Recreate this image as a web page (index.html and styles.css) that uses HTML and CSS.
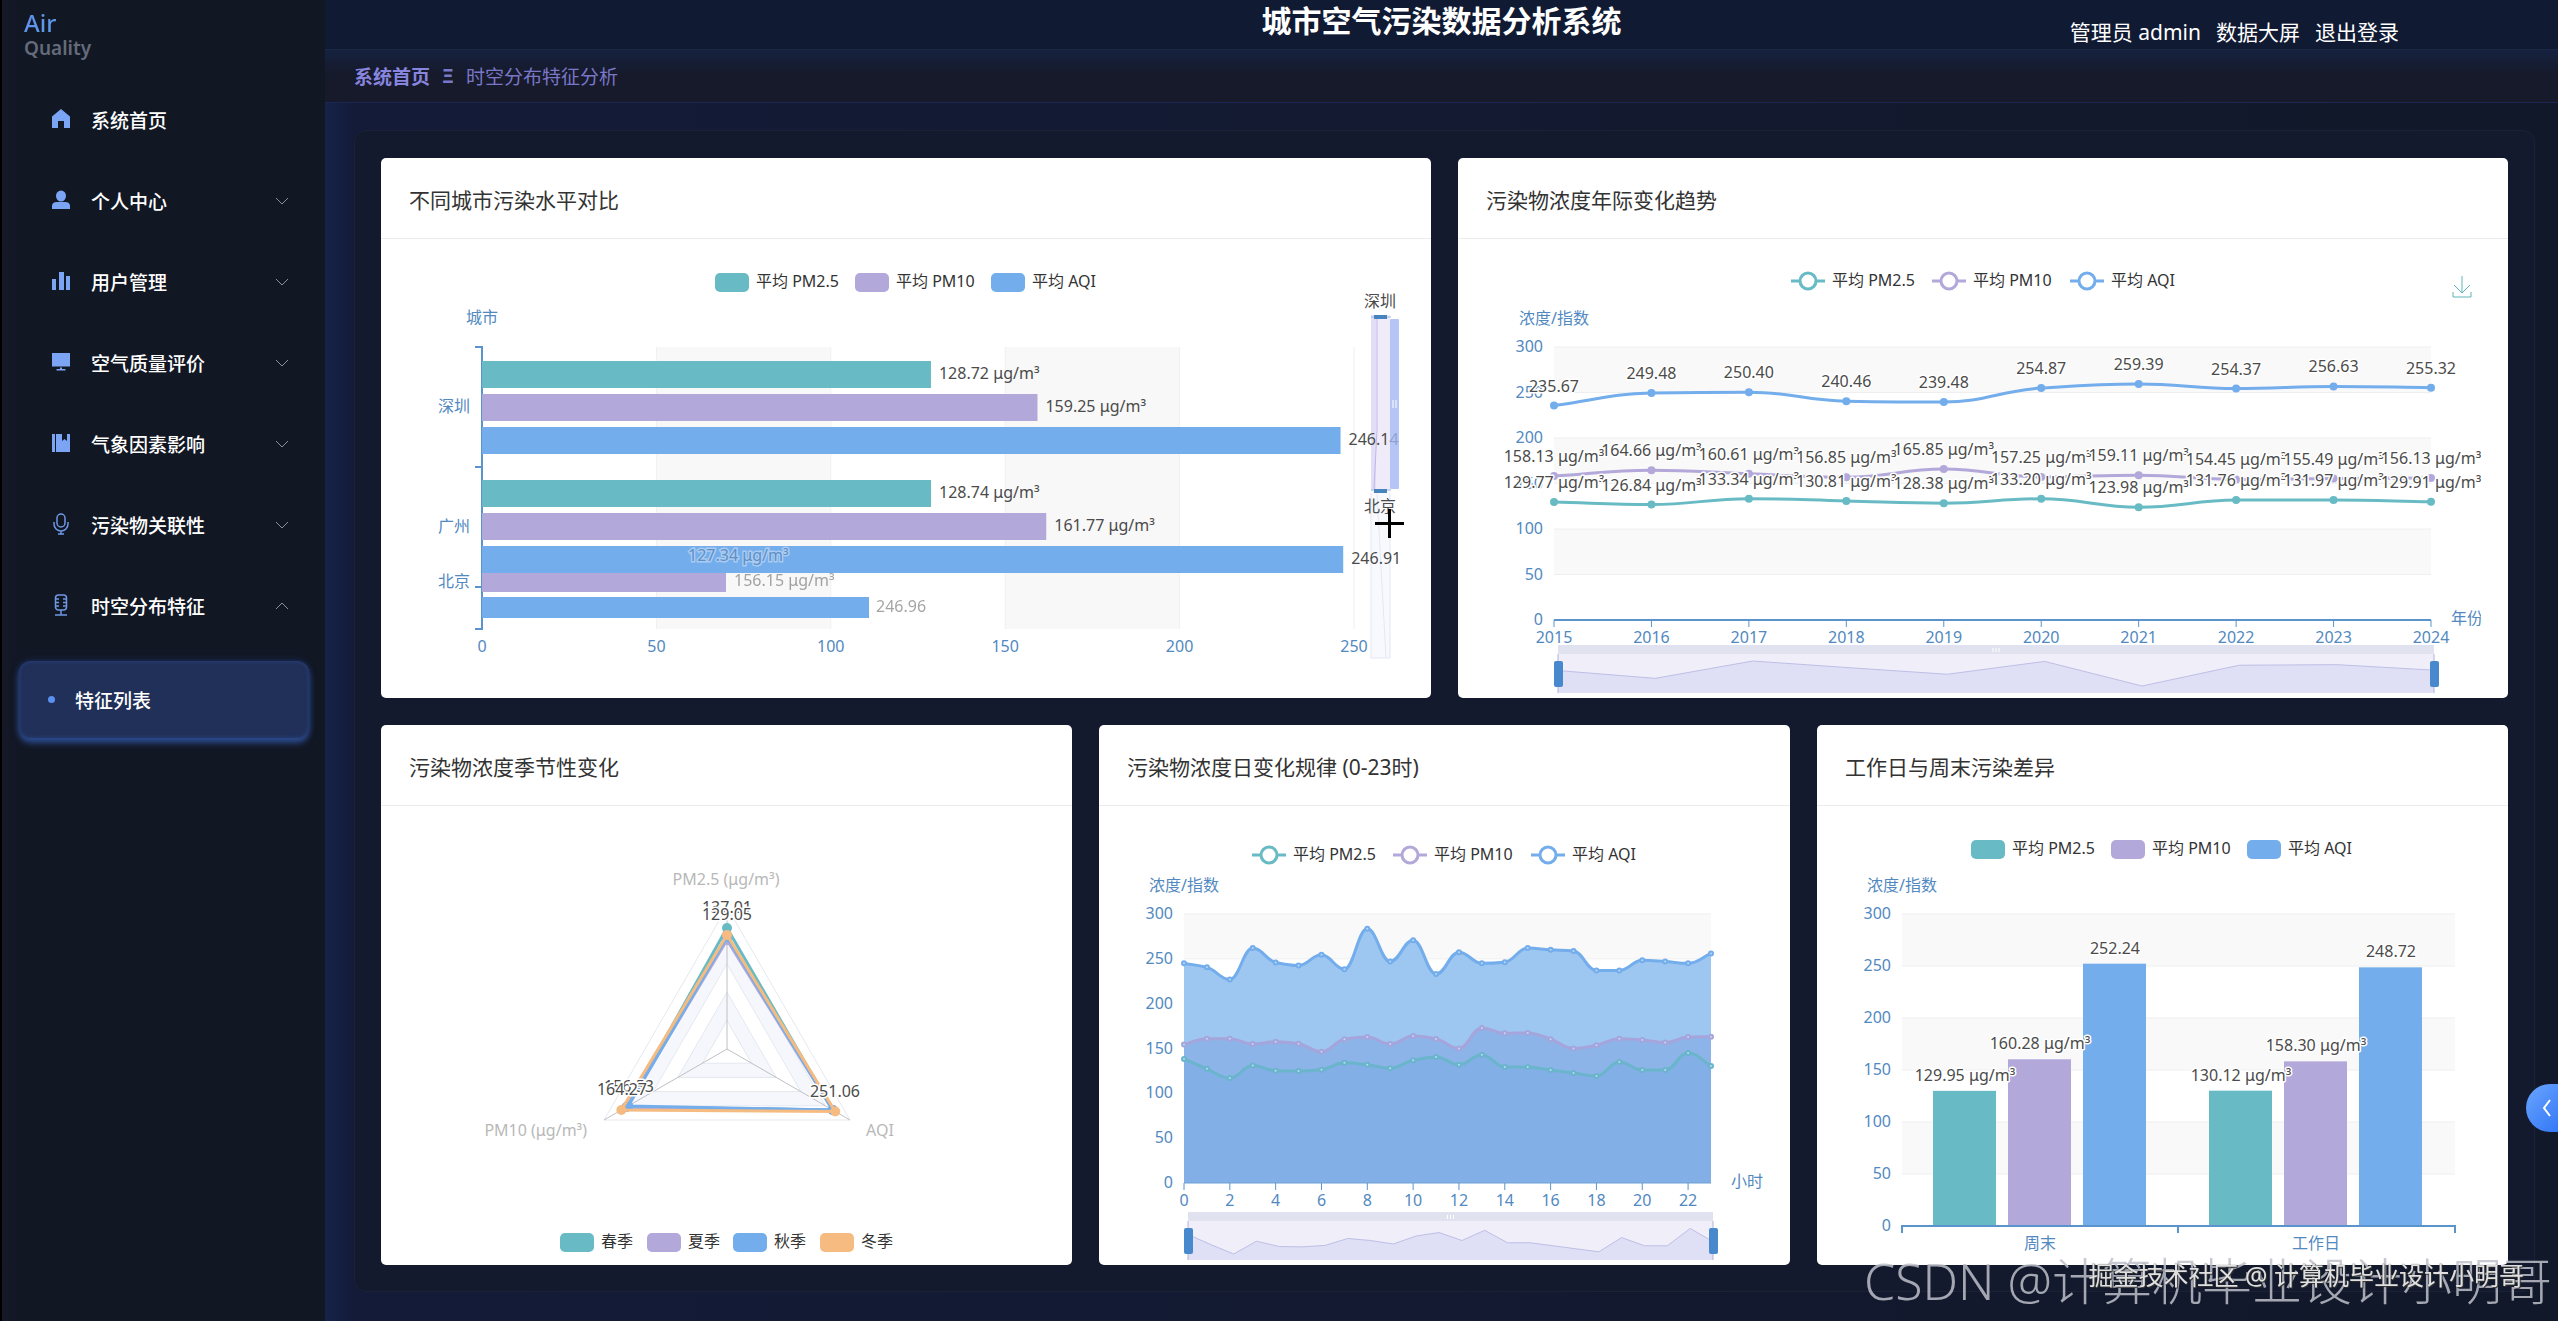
FILE: index.html
```html
<!DOCTYPE html>
<html lang="zh-CN">
<head>
<meta charset="utf-8">
<meta name="viewport" content="width=device-width, initial-scale=1">
<title>城市空气污染数据分析系统</title>
<link rel="stylesheet" href="styles.css">
</head>
<body>
<div class="app">
  <aside class="sidebar">
    <div class="logo"><strong class="logo-main">Air</strong><span class="logo-sub">Quality</span></div>
    <nav class="menu">
      <a class="menu-item" href="#home">
        <svg class="icon" viewBox="0 0 20 20"><path d="M10 0 19 7.500V19h-6v-7H7v7H1V7.500z"/></svg>
        <span class="menu-text">系统首页</span>
      </a>
      <button class="menu-item" type="button">
        <svg class="icon" viewBox="0 0 20 20"><ellipse cx="10" cy="6" rx="5" ry="5.500"/><path d="M1 19v-3q0-4 5-4h8q5 0 5 4v3z"/></svg>
        <span class="menu-text">个人中心</span>
        <svg class="chevron" viewBox="0 0 14 8"><path d="M1 1l6 6 6-6"/></svg>
      </button>
      <button class="menu-item" type="button">
        <svg class="icon" viewBox="0 0 20 20"><path d="M1 8h4v11H1zM8 1h5v18H8zM15 5h4v14h-4z"/></svg>
        <span class="menu-text">用户管理</span>
        <svg class="chevron" viewBox="0 0 14 8"><path d="M1 1l6 6 6-6"/></svg>
      </button>
      <button class="menu-item" type="button">
        <svg class="icon" viewBox="0 0 20 20"><path d="M1 1h18v13.500H1zM9 15.500h2v1.500h3.500v1.500h-9V17H9z"/></svg>
        <span class="menu-text">空气质量评价</span>
        <svg class="chevron" viewBox="0 0 14 8"><path d="M1 1l6 6 6-6"/></svg>
      </button>
      <button class="menu-item" type="button">
        <svg class="icon" viewBox="0 0 20 20"><path d="M1 1h3v18H1zM5 1h6v7l2.500-2L16 8V1h3v18H5z"/></svg>
        <span class="menu-text">气象因素影响</span>
        <svg class="chevron" viewBox="0 0 14 8"><path d="M1 1l6 6 6-6"/></svg>
      </button>
      <button class="menu-item" type="button">
        <svg class="icon icon-line" viewBox="0 0 20 22"><rect x="6" y="1" width="8" height="13" rx="4"/><path d="M3 9v2a7 7 0 0 0 14 0V9M10 18v3M7 21h6"/></svg>
        <span class="menu-text">污染物关联性</span>
        <svg class="chevron" viewBox="0 0 14 8"><path d="M1 1l6 6 6-6"/></svg>
      </button>
      <button class="menu-item" type="button" aria-expanded="true">
        <svg class="icon icon-line" viewBox="0 0 20 22"><rect x="4.500" y="1" width="11" height="15" rx="3"/><path d="M5 5h3M5 8.500h3M5 12h3M15 5h-3M15 8.500h-3M15 12h-3M10 16v5M4 21h12"/></svg>
        <span class="menu-text">时空分布特征</span>
        <svg class="chevron" viewBox="0 0 14 8"><path d="M1 7l6-6 6 6"/></svg>
      </button>
      <a class="submenu-item" href="#features"><span class="bullet"></span>特征列表</a>
    </nav>
  </aside>

  <div class="main">
    <header class="topbar">
      <h1 class="title">城市空气污染数据分析系统</h1>
      <nav class="user-nav"><span>管理员 admin</span><a href="#screen">数据大屏</a><a href="#logout">退出登录</a></nav>
    </header>
    <nav class="breadcrumb"><a class="crumb-home" href="#home">系统首页</a><b>Ξ</b><span>时空分布特征分析</span></nav>

    <main class="panel">
      <section class="card wide">
        <h2 class="card-title">不同城市污染水平对比</h2>
        <div class="card-body"><svg class="chart" id="city" viewBox="408 239 996 459"></svg></div>
      </section>
      <section class="card wide">
        <h2 class="card-title">污染物浓度年际变化趋势</h2>
        <div class="card-body">
          <svg class="chart" id="year" viewBox="1485 239 996 459"></svg>
          <button class="download" type="button" aria-label="保存为图片"><svg viewBox="0 0 20 22"><path d="M10 0v17M2 9l8 8 8-8M1 16v5h18v-5"/></svg></button>
        </div>
      </section>
      <section class="card">
        <h2 class="card-title">污染物浓度季节性变化</h2>
        <div class="card-body"><svg class="chart" id="season" viewBox="408 806 637 459"></svg></div>
      </section>
      <section class="card">
        <h2 class="card-title">污染物浓度日变化规律 (0-23时)</h2>
        <div class="card-body"><svg class="chart" id="hour" viewBox="1126 806 637 459"></svg></div>
      </section>
      <section class="card">
        <h2 class="card-title">工作日与周末污染差异</h2>
        <div class="card-body"><svg class="chart" id="week" viewBox="1844 806 637 459"></svg></div>
      </section>
    </main>
  </div>
</div>
<button class="drawer" type="button" aria-label="展开"><svg viewBox="0 0 10 18"><path d="M8 1 2 9l6 8"/></svg></button>
<div class="mark mark-large">CSDN @计算机毕业设计小明哥</div>
<div class="mark mark-small">掘金技术社区 @ 计算机毕业设计小明哥</div>
<script src="charts.js"></script>
</body>
</html>
```
FILE: styles.css
```css
* { box-sizing: border-box; }

body {
  margin: 0;
  background: #111829;
  color: #fff;
  font-family: "Noto Sans", "Noto Sans CJK SC", sans-serif;
  font-size: 19px;
  overflow-x: hidden;
}

a { color: inherit; text-decoration: none; }
button { font: inherit; color: inherit; border: 0; background: none; padding: 0; cursor: pointer; }

.app { display: flex; min-height: 100vh; }

/* Sidebar */
.sidebar {
  flex: 0 0 325px;
  border-left: 2px solid #000;
  background: linear-gradient(90deg, #151826, #121724 20px);
}
.logo { display: flex; flex-direction: column; height: 79px; padding: 10px 22px 0; }
.logo-main {
  align-self: flex-start;
  font-size: 24px;
  font-weight: 500;
  line-height: 26px;
  background: linear-gradient(135deg, #5f8df0, #5fa0e8);
  background-clip: text;
  color: transparent;
}
.logo-sub { line-height: 24px; font-weight: 600; color: #646b7a; }
.menu { display: flex; flex-direction: column; }
.menu-item {
  display: flex;
  align-items: center;
  width: 100%;
  height: 81px;
  padding: 0 36px 0 49px;
  text-align: left;
  font-weight: 500;
}
.icon { flex: none; width: 20px; height: 22px; margin-right: 20px; margin-bottom: 2px; fill: #7ba4f5; }
.icon-line { fill: none; stroke: #6f98e6; stroke-width: 1.500; }
.menu-text { flex: 1; }
.chevron { width: 14px; height: 8px; fill: none; stroke: #8a8f9a; stroke-width: 1; }
.submenu-item {
  display: flex;
  align-items: center;
  gap: 20px;
  height: 77px;
  margin: 15px 16px 0 17px;
  padding-left: 29px;
  border-radius: 12px;
  background: #203058;
  box-shadow: inset 0 0 4px #2b4280, 0 5px 6px #2c4a8c, 0 0 6px #1c3466;
  font-weight: 500;
}
.bullet { width: 7px; height: 7px; border-radius: 50%; background: #5b8ff0; }

/* Page frame */
.main {
  flex: 1;
  min-width: 0;
  background: linear-gradient(90deg, #15234a, #131b38 28px, #131a31 50%, #111829);
}
.topbar {
  display: grid;
  grid-template-columns: 1fr auto 1fr;
  height: 50px;
  border-bottom: 1px solid #1b2947;
  background: #111a33;
}
.title { grid-column: 2; margin: 0; font-size: 30px; line-height: 42px; font-weight: 700; }
.user-nav {
  display: flex;
  justify-content: flex-end;
  gap: 15px;
  padding: 16px 159px 0 0;
  font-size: 21px;
  line-height: 32px;
  white-space: nowrap;
}
.breadcrumb {
  display: flex;
  align-items: center;
  gap: 12px;
  height: 53px;
  padding: 0 29px;
  border-bottom: 1px solid #1d2650;
  background: linear-gradient(#15223f, #161a2b 24px);
  color: #7a77c9;
}
.crumb-home { font-weight: 700; color: #8885df; }
.panel {
  display: grid;
  grid-template-columns: repeat(6, 1fr);
  gap: 27px;
  margin: 27px 23px 28px 29px;
  padding: 27px 26px 26px;
  border: 1px solid #1b2236;
  border-radius: 12px;
  background: #131a2d;
}

/* Cards */
.card {
  grid-column: span 2;
  min-width: 0;
  overflow: hidden;
  border-radius: 5px;
  background: #fff;
  color: #333;
}
.card.wide { grid-column: span 3; }
.card-title {
  margin: 0;
  padding: 26px 28px 22px;
  border-bottom: 1px solid #ececef;
  font-size: 21px;
  line-height: 32px;
  font-weight: 400;
}
.card-body { position: relative; padding: 0 27px; }
.chart { display: block; width: 100%; height: auto; font-size: 16px; }
.chart text { fill: #4b4b4b; }
.chart .axis { fill: #5289bf; }
.chart .dim { fill: #b8b8b8; }
.chart .legend { fill: #333; }
.chart .halo { stroke: #fff; stroke-width: 3px; paint-order: stroke; stroke-linejoin: round; }
.chart .faded { opacity: .5; }
.chart .ghost { fill: #5f8fc6; stroke: #a9cbf2; stroke-width: 3px; paint-order: stroke; }
.download { position: absolute; top: 37px; right: 36px; width: 20px; height: 22px; }
.download svg { display: block; fill: none; stroke: #5fb5b8; stroke-width: 1; }

/* Floating layers */
.drawer {
  position: fixed;
  top: 1084px;
  right: 0;
  width: 32px;
  height: 48px;
  padding-left: 16px;
  border-radius: 24px 0 0 24px;
  background: linear-gradient(135deg, #6aa5ff, #3478f6);
}
.drawer svg { display: block; width: 10px; height: 18px; fill: none; stroke: #fff; stroke-width: 2; }
.mark { position: fixed; white-space: nowrap; pointer-events: none; }
.mark-large {
  right: 6px;
  bottom: 3px;
  font-size: 50px;
  line-height: 74px;
  font-weight: 300;
  color: rgba(190, 193, 202, .85);
}
.mark-small {
  right: 34px;
  bottom: 28px;
  font-size: 25px;
  line-height: 36px;
  color: rgba(255, 255, 255, .85);
  text-shadow: 1px 1px 1px #333, 0 0 1px #333;
}
```
FILE: charts.js
```js
const TEAL = '#68bbc4', PURPLE = '#b3a8da', BLUE = '#73adeb', ORANGE = '#f5bb80', AXIS = '#5b94cc';
const UNIT = ' μg/m³';

const text = (x, y, s, cls = '', anchor = 'start') =>
  `<text x="${x}" y="${y + 6}" class="${cls}" text-anchor="${anchor}">${s}</text>`;
const rect = (x, y, w, h, fill, r = 0) =>
  `<rect x="${x}" y="${y}" width="${w}" height="${h}" fill="${fill}" rx="${r}"/>`;
const path = (d, stroke, w = 1, fill = 'none') =>
  `<path d="${d}" stroke="${stroke}" stroke-width="${w}" fill="${fill}"/>`;
const draw = (id, parts) => { document.getElementById(id).innerHTML = parts.join(''); };

function barLegend(y, items) {
  return items.map(([x, name, color]) => rect(x, y, 34, 19, color, 5) + text(x + 41, y + 8, name, 'legend')).join('');
}
function lineLegend(y, items) {
  return items.map(([x, name, color]) => path(`M${x} ${y}h34`, color, 3) +
    `<circle cx="${x + 17}" cy="${y}" r="8" fill="#fff" stroke="${color}" stroke-width="3"/>` +
    text(x + 41, y - 1, name, 'legend')).join('');
}

// Monotone cubic through the points
function smooth(p) {
  const n = p.length, s = [], m = [];
  for (let i = 0; i < n - 1; i++) s.push((p[i + 1][1] - p[i][1]) / (p[i + 1][0] - p[i][0]));
  for (let i = 0; i < n; i++) {
    if (i === 0) m.push(s[0]);
    else if (i === n - 1) m.push(s[n - 2]);
    else m.push(s[i - 1] * s[i] <= 0 ? 0 : 2 * s[i - 1] * s[i] / (s[i - 1] + s[i]));
  }
  let d = `M${p[0]}`;
  for (let i = 0; i < n - 1; i++) {
    const h = (p[i + 1][0] - p[i][0]) / 2.4;
    d += `C${p[i][0] + h} ${p[i][1] + h * m[i]} ${p[i + 1][0] - h} ${p[i + 1][1] - h * m[i + 1]} ${p[i + 1]}`;
  }
  return d;
}

// Horizontal bands, value labels and axis name
function valueAxis(x0, x1, top, bottom) {
  const step = (bottom - top) / 6;
  let out = '';
  for (let i = 0; i <= 6; i++) {
    const y = top + i * step;
    if (i < 6 && i % 2 === 0) out += rect(x0, y, x1 - x0, step, '#f9f9f9');
    if (i < 6) out += path(`M${x0} ${y}H${x1}`, '#efefef');
    out += text(x0 - 11, y - 1, 300 - i * 50, 'axis', 'end');
  }
  return out + text(x0, top - 29, '浓度/指数', 'axis', 'middle');
}

function slider(x0, x1, top, points) {
  const h = 48, line = points.map(p => p.join(' ')).join('L');
  const handle = x => path(`M${x} ${top + 9}v${h - 9}`, '#b0b3d8') + rect(x - 4, top + 16, 9, 26, '#4888cc', 2);
  return rect(x0, top, x1 - x0, 9, '#e1e2ef') + rect(x0, top + 9, x1 - x0, h - 9, '#f0eef9') +
    path(`M${x0} ${top + h}L${line}L${x1} ${top + h}z`, 'none', 0, '#dfe0f5') + path(`M${line}`, '#bdbfe6') +
    path(`M${(x0 + x1) / 2 - 3} ${top + 3}v4m3-4v4m3-4v4`, '#fff') + handle(x0) + handle(x1);
}

function dots(points, color, fill, r) {
  return points.map(([x, y]) => `<circle cx="${x}" cy="${y}" r="${r}" fill="${fill}" stroke="${color}" stroke-width="2"/>`).join('');
}

/* City comparison */
(function () {
  const out = [], labels = [];
  const px = v => 482 + v * 3.488;
  out.push(rect(px(50), 347, 174, 282, '#f8f8f8'), rect(px(150), 347, 175, 282, '#f8f8f8'));
  for (let v = 50; v <= 250; v += 50) out.push(path(`M${px(v)} 347V629`, '#f0f0f0'));
  for (let v = 0; v <= 250; v += 50) out.push(text(px(v), 646, v, 'axis', 'middle'));
  out.push(barLegend(273, [[715, '平均 PM2.5', TEAL], [855, '平均 PM10', PURPLE], [991, '平均 AQI', BLUE]]));
  out.push(text(482, 317, '城市', 'axis', 'middle'));
  [['深圳', 406], ['广州', 526], ['北京', 581]].forEach(([n, y]) => out.push(text(470, y, n, 'axis', 'end')));
  out.push(path('M482 346V630M475 347h7M475 467h7M475 587h7M475 629h7', AXIS, 2));
  out.push(rect(482, 573, 244, 19, PURPLE), rect(482, 597, 387, 21, BLUE));
  out.push(text(734, 580, '156.15' + UNIT, 'faded'), text(876, 606, '246.96', 'faded'));
  const bars = [[361, [128.72, 159.25, 246.14]], [480, [128.74, 161.77, 246.91]]];
  bars.forEach(([top, vals]) => vals.forEach((v, i) => {
    const y = top + i * 33;
    out.push(rect(482, y, v * 3.488, 27, [TEAL, PURPLE, BLUE][i]));
    labels.push(text(px(v) + 8, y + 12, v.toFixed(2) + (i < 2 ? UNIT : '')));
  }));
  out.push(text(688, 555, '127.34' + UNIT, 'ghost'));
  out.push(rect(1371, 315, 19, 175, '#f0ebf8'), rect(1371, 315, 5, 175, '#e1def5'));
  out.push(rect(1371, 490, 19, 168, '#f8f9fd'));
  out.push(path('M1377 316V430L1374 489', '#bdb8e8'), path('M1377 493L1386 658M1371 493V658H1390V493', '#e4e7f5'));
  out.push(...labels);
  out.push('<g opacity=".8">', rect(1390, 319, 9, 170, '#a3b7f4', 1), '</g>', path('M1393 400v8m3-8v8', '#fff', 1));
  out.push(path('M1371 317h20M1371 490h20', '#a8b4dc'), rect(1374, 315, 13, 4, '#4684bd'), rect(1374, 489, 13, 4, '#4684bd'));
  out.push(text(1380, 301, '深圳', '', 'middle'), text(1380, 506, '北京', '', 'middle'));
  out.push(path('M1375 523.500h29M1389.500 509v29', '#000', 3));
  draw('city', out);
})();

/* Yearly trend */
(function () {
  const x0 = 1554, x1 = 2431, top = 347, bottom = 620;
  const px = i => x0 + i * (x1 - x0) / 9, py = v => bottom - v * (bottom - top) / 300;
  const pm25 = [129.77, 126.84, 133.34, 130.81, 128.38, 133.20, 123.98, 131.76, 131.97, 129.91];
  const pm10 = [158.13, 164.66, 160.61, 156.85, 165.85, 157.25, 159.11, 154.45, 155.49, 156.13];
  const aqi = [235.67, 249.48, 250.40, 240.46, 239.48, 254.87, 259.39, 254.37, 256.63, 255.32];
  const out = [valueAxis(x0, x1, top, bottom)];
  out.push(lineLegend(281, [[1791, '平均 PM2.5', TEAL], [1932, '平均 PM10', PURPLE], [2070, '平均 AQI', BLUE]]));
  out.push(path(`M${x0} ${bottom}H${x1}`, AXIS, 2));
  for (let i = 0; i < 10; i++) out.push(path(`M${px(i)} ${bottom}v7`, AXIS, 1), text(px(i), 637, 2015 + i, 'axis', 'middle'));
  out.push(text(2451, 618, '年份', 'axis'));
  const series = [[pm25, TEAL, UNIT], [pm10, PURPLE, UNIT], [aqi, BLUE, '']];
  series.forEach(([vals, color]) => {
    const p = vals.map((v, i) => [px(i), py(v)]);
    out.push(path(smooth(p), color, 3), dots(p, color, color, 3));
  });
  series.forEach(([vals, , unit]) => vals.forEach((v, i) =>
    out.push(text(px(i), py(v) - 20, v.toFixed(2) + unit, 'halo', 'middle'))));
  out.push(slider(1558, 2434, 645, pm25.map((v, i) => [1558 + i * 876 / 9, 686 - (v - 123.98) * 2.67])));
  draw('year', out);
})();

/* Seasonal radar */
(function () {
  const cx = 727, cy = 1049, R = 142;
  const at = (r, k) => [cx + [0, -.866, .866][k] * r, cy + [-1, .5, .5][k] * r];
  const tri = rs => 'M' + rs.map((r, k) => at(r, k).join(' ')).join('L') + 'z';
  const out = [];
  for (let i = 5; i > 0; i--) {
    const r = R * i / 5;
    out.push(path(tri([r, r, r]), '#e4e8ee', 1, i % 2 ? '#fff' : '#f5f7fc'));
  }
  for (let k = 0; k < 3; k++) out.push(path(`M${cx} ${cy}L${at(R, k)}`, '#c0c0c4', 1));
  [[[121, 116, 122], TEAL], [[109, 116, 122], PURPLE], [[112, 114, 122], BLUE], [[114, 122, 125], ORANGE]].forEach(([rs, c]) => {
    out.push(path(tri(rs), c, 3));
    rs.forEach((r, k) => { const p = at(r, k); out.push(`<circle cx="${p[0]}" cy="${p[1]}" r="5" fill="${c}"/>`); });
  });
  out.push(text(727, 907, '137.01', 'halo', 'middle'), text(727, 914, '129.05', 'halo', 'middle'));
  out.push(text(629, 1086, '156.53', 'halo', 'middle'), text(622, 1089, '164.27', 'halo', 'middle'));
  out.push(text(835, 1091, '251.06', 'halo', 'middle'));
  out.push(text(726, 879, 'PM2.5 (μg/m³)', 'dim', 'middle'), text(587, 1130, 'PM10 (μg/m³)', 'dim', 'end'), text(866, 1130, 'AQI', 'dim'));
  out.push(barLegend(1233, [[560, '春季', TEAL], [647, '夏季', PURPLE], [733, '秋季', BLUE], [820, '冬季', ORANGE]]));
  draw('season', out);
})();

/* Hourly pattern */
(function () {
  const x0 = 1184, x1 = 1711, top = 914, bottom = 1183;
  const px = i => x0 + i * (x1 - x0) / 23, py = v => bottom - v * (bottom - top) / 300;
  const aqi = [245, 240.5, 227, 262, 246, 242.5, 254.5, 238.5, 283.5, 247, 270.7, 233, 257.4, 245, 246.3, 262, 260, 258.7, 237, 237, 248.3, 247, 245, 256];
  const pm10 = [154.5, 161, 161, 155, 157.4, 155.4, 146.3, 160.3, 162.8, 155, 164, 160.7, 150, 173, 167, 167.4, 160.3, 150, 153.7, 161, 159.5, 156.6, 162.8, 163.2];
  const pm25 = [138.4, 127.3, 117, 131, 125.2, 124.8, 126.4, 134, 131.8, 128, 136.8, 140.5, 131.8, 143, 129.3, 129.3, 126, 122.7, 119.4, 135, 126, 126, 145, 130.6];
  const out = [valueAxis(x0, x1, top, bottom)];
  out.push(lineLegend(855, [[1252, '平均 PM2.5', TEAL], [1393, '平均 PM10', PURPLE], [1531, '平均 AQI', BLUE]]));
  [[aqi, BLUE, '#9dc7f1'], [pm10, '#a5a5dc', '#8cb4e9'], [pm25, '#6ab5cb', '#82afe6']].forEach(([vals, color, fill]) => {
    const p = vals.map((v, i) => [px(i), py(v)]), d = smooth(p);
    out.push(path(`${d}L${x1} ${bottom}L${x0} ${bottom}z`, 'none', 0, fill), path(d, color, 3), dots(p, color, '#bcd9f5', 2));
  });
  out.push(path(`M${x0} ${bottom}H${x1}`, '#6f9fd6', 1));
  for (let i = 0; i < 24; i += 2) out.push(path(`M${px(i)} ${bottom}v7`, AXIS, 1), text(px(i), 1200, i, 'axis', 'middle'));
  out.push(text(1731, 1181, '小时', 'axis'));
  out.push(slider(1188, 1713, 1212, pm25.map((v, i) => [1188 + i * 525 / 23, 1254 - (v - 117) * .912])));
  draw('hour', out);
})();

/* Weekday and weekend */
(function () {
  const x0 = 1902, x1 = 2455, top = 914, bottom = 1226;
  const out = [valueAxis(x0, x1, top, bottom)];
  out.push(barLegend(840, [[1971, '平均 PM2.5', TEAL], [2111, '平均 PM10', PURPLE], [2247, '平均 AQI', BLUE]]));
  const groups = [['周末', [129.95, 160.28, 252.24]], ['工作日', [130.12, 158.30, 248.72]]];
  const labels = [];
  groups.forEach(([name, vals], g) => {
    vals.forEach((v, i) => {
      const x = 1933 + g * 276 + i * 75, h = v * 1.04;
      out.push(rect(x, bottom - h, 63, h, [TEAL, PURPLE, BLUE][i]));
      labels.push(text(x + 32, bottom - h - 16, v.toFixed(2) + (i < 2 ? UNIT : ''), 'halo', 'middle'));
    });
    labels.push(text(2040 + g * 276, 1243, name, 'axis', 'middle'));
  });
  out.push(...labels, path(`M1902 1233v-7H2455v7M2178 1226v7`, AXIS, 2));
  draw('week', out);
})();
```
